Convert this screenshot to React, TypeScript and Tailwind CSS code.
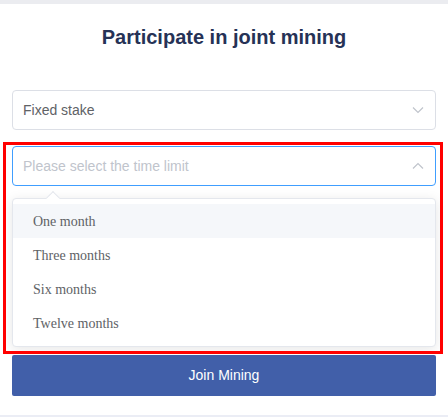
import React from 'react';

const options = ['One month', 'Three months', 'Six months', 'Twelve months'];

const Chevron: React.FC<{ up?: boolean }> = ({ up }) => (
  <svg width="14" height="14" viewBox="0 0 14 14" className="text-[#c0c4cc]">
    <path
      d={up ? 'M2 9.5 L7 4.5 L12 9.5' : 'M2 4.5 L7 9.5 L12 4.5'}
      fill="none"
      stroke="currentColor"
      strokeWidth="1.2"
    />
  </svg>
);

const App: React.FC = () => {
  return (
    <div className="relative w-[448px] h-[417px] bg-white overflow-hidden font-['Liberation_Sans',Arial,sans-serif]">
      <div className="h-[4px] bg-[#ebecf0]" />

      <div className="px-[12px]">
        <h1 className="mt-[19px] text-center text-[20px] leading-[28px] font-bold text-[#263256]">
          Participate in joint mining
        </h1>

        {/* Stake type */}
        <div className="mt-[39px] h-[40px] flex items-center justify-between px-[10px] border border-[#dcdfe6] rounded-[4px]">
          <span className="text-[14px] text-[#606266]">Fixed stake</span>
          <Chevron />
        </div>

        {/* Time limit */}
        <div className="mt-[16px] h-[40px] flex items-center justify-between px-[10px] border border-[#409eff] rounded-[4px]">
          <span className="text-[14px] text-[#c0c4cc]">Please select the time limit</span>
          <Chevron up />
        </div>

        {/* Dropdown */}
        <div className="relative mt-[12px] border border-[#e4e7ed] rounded-[4px] bg-white shadow-[0_2px_12px_rgba(0,0,0,0.1)] pt-[5px] pb-[6px]">
          <div className="absolute -top-[6px] left-[35px] w-[10px] h-[10px] bg-white border-l border-t border-[#e4e7ed] rotate-45" />
          {options.map((opt, i) => (
            <div
              key={opt}
              className={`relative h-[34px] flex items-center px-[20px] text-[14px] text-[#606266] font-['Liberation_Serif','Times_New_Roman',serif] ${
                i === 0 ? 'bg-[#f5f7fa]' : ''
              }`}
            >
              {opt}
            </div>
          ))}
        </div>

        <button className="mt-[8px] w-full h-[41px] bg-[#415fa9] rounded-[2px] text-white text-[14px]">
          Join Mining
        </button>
      </div>

      <div className="absolute left-0 right-0 bottom-0 h-[2px] bg-[#ebedf5]" />

      {/* highlight frame */}
      <div className="absolute left-[3px] top-[142px] w-[440px] h-[212px] border-[3px] border-[#ff0000] pointer-events-none" />
    </div>
  );
};

export default App;
